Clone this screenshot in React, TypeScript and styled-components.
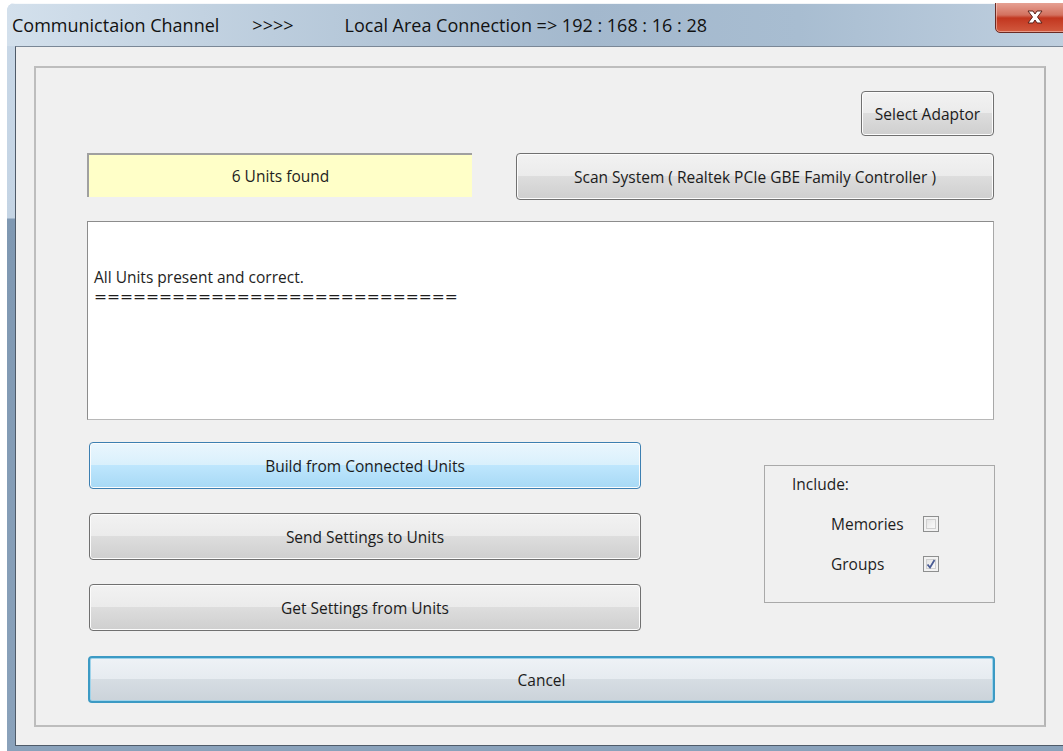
import styled, { createGlobalStyle, css } from "styled-components";

const GlobalStyle = createGlobalStyle`
  html, body {
    margin: 0;
    padding: 0;
    background: #ffffff;
    overflow: hidden;
  }
  body {
    font-family: "Open Sans", "Noto Sans", "Liberation Sans", sans-serif;
    font-size: 15.5px;
    color: #1e1e1e;
  }
`;

const Window = styled.div`
  margin: 3px 0 0 7px;
  height: 748px;
  display: flex;
  flex-direction: column;
  border-top-left-radius: 8px;
  background: linear-gradient(to bottom, #c9d8e7 0px, #c4d4e4 215px, #7f98b2 216px, #8aa2bb 100%);
  overflow: hidden;
`;

const TitleBar = styled.div`
  height: 43px;
  display: flex;
  align-items: center;
  padding-left: 5px;
  position: relative;
  background: linear-gradient(
    to right,
    #d3e0ec 0%,
    #bccddd 25%,
    #a3b8cd 55%,
    #a8bdd1 75%,
    #bfcfdf 100%
  );
  box-shadow: inset 0 1px 0 rgba(255, 255, 255, 0.85);
  font-size: 18px;
  color: #111;
`;

const TitlePart = styled.span<{ $gap: number }>`
  margin-right: ${(p) => p.$gap}px;
  white-space: nowrap;
`;

const CloseButton = styled.div`
  position: absolute;
  top: -3px;
  right: -12px;
  width: 78px;
  height: 31px;
  border: 1px solid #6b2a23;
  border-radius: 0 0 5px 5px;
  background: linear-gradient(to bottom, #e9a99c 0%, #d3715f 45%, #c2361f 55%, #d25a3f 100%);
  display: flex;
  align-items: center;
  justify-content: center;
  box-shadow: inset 0 0 0 1px rgba(255, 220, 210, 0.5);
`;

const ClientArea = styled.div`
  flex: 1;
  margin: 0 0 5px 8px;
  border-top: 1px solid #7a8796;
  border-left: 1px solid #4f5b69;
  border-bottom: 1px solid #4f5b69;
  background: #f0f0f0;
  padding: 19px 14px 18px 18px;
  display: flex;
`;

const GroupBox = styled.div`
  width: 1012px;
  border: 2px solid #bdbdbd;
  border-right-color: #b5b5b5;
  padding: 23px 50px 0 50px;
  box-sizing: border-box;
  display: flex;
  flex-direction: column;
`;

const Row = styled.div<{ $top: number; $end?: boolean }>`
  display: flex;
  justify-content: ${(p) => (p.$end ? "flex-end" : "space-between")};
  align-items: flex-start;
  margin-top: ${(p) => p.$top}px;
`;

const buttonFace = css`
  border: 1px solid #707070;
  border-radius: 4px;
  background: linear-gradient(to bottom, #f2f2f2 0%, #ebebeb 49%, #dddddd 50%, #cfcfcf 100%);
  box-shadow: inset 0 0 0 1px #fcfcfc;
`;

const Button = styled.div<{ $width: number; $height?: number; $tone?: "plain" | "hover" | "focus" }>`
  width: ${(p) => p.$width}px;
  height: ${(p) => p.$height ?? 47}px;
  box-sizing: border-box;
  display: flex;
  align-items: center;
  justify-content: center;
  color: #1b1b1b;
  white-space: nowrap;
  ${buttonFace}
  ${(p) =>
    p.$tone === "hover" &&
    css`
      border-color: #3c7fb1;
      background: linear-gradient(to bottom, #eaf6fd 0%, #d9f0fc 49%, #bee6fd 50%, #a7d9f5 100%);
    `}
  ${(p) =>
    p.$tone === "focus" &&
    css`
      border: 2px solid #3c9ac4;
      background: linear-gradient(to bottom, #eef2f6 0%, #e6ebf0 49%, #d6dde3 50%, #cbd3da 100%);
      box-shadow: inset 0 0 0 1px #9fd3ea;
    `}
`;

const StatusLabel = styled.div`
  width: 385px;
  height: 44px;
  box-sizing: border-box;
  margin-left: 1px;
  background: #ffffc8;
  border-top: 2px solid #a0a0a0;
  border-left: 2px solid #a0a0a0;
  display: flex;
  align-items: center;
  justify-content: center;
`;

const LogBox = styled.div`
  height: 199px;
  margin: 21px 0 0 1px;
  box-sizing: border-box;
  background: #ffffff;
  border: 1px solid #8c8c8c;
  border-right-color: #a8a8a8;
  border-bottom-color: #b8b8b8;
  padding: 44px 0 0 6px;
  line-height: 22px;
`;

const LogLine = styled.div`
  white-space: nowrap;
`;

// the separator row of '=' characters under the log message
const RuleLine = styled.div`
  white-space: nowrap;
  font-family: "DejaVu Sans", sans-serif;
  font-size: 15.5px;
  line-height: 22px;
  margin-top: -2px;
`;

const ActionArea = styled.div`
  display: flex;
  justify-content: space-between;
  margin-top: 22px;
  padding-left: 3px;
`;

const ButtonStack = styled.div`
  display: flex;
  flex-direction: column;
  gap: 24px;
`;

const IncludeBox = styled.div`
  width: 231px;
  height: 138px;
  margin-top: 23px;
  margin-right: -1px;
  box-sizing: border-box;
  border: 1px solid #a9a9a9;
  padding: 8px 0 0 27px;
  display: flex;
  flex-direction: column;
`;

const IncludeTitle = styled.div`
  line-height: 20px;
  margin-bottom: 20px;
`;

const OptionRow = styled.div`
  display: flex;
  align-items: center;
  height: 20px;
  margin-left: 39px;
  margin-bottom: 20px;
`;

const OptionLabel = styled.span`
  width: 92px;
`;

const CheckBox = styled.div`
  width: 16px;
  height: 16px;
  box-sizing: border-box;
  border: 1px solid #8e8f8f;
  background: linear-gradient(135deg, #dcdcdc 0%, #f4f4f4 60%, #ffffff 100%);
  box-shadow: inset 0 0 0 2px #f2f2f2, inset 0 0 0 3px #d0d0d0;
  display: flex;
  align-items: center;
  justify-content: center;
`;

const CancelRow = styled.div`
  margin-top: 25px;
  padding-left: 2px;
`;

export default function App() {
  return (
    <>
      <GlobalStyle />
      <Window>
        <TitleBar>
          <TitlePart $gap={33}>Communictaion Channel</TitlePart>
          <TitlePart $gap={51}>&gt;&gt;&gt;&gt;</TitlePart>
          <TitlePart $gap={0}>Local Area Connection =&gt; 192 : 168 : 16 : 28</TitlePart>
          <CloseButton>
            <svg width="18" height="14" viewBox="0 0 18 14">
              <path
                d="M2 1 L7 1 L9 4 L11 1 L16 1 L11.5 7 L16 13 L11 13 L9 10 L7 13 L2 13 L6.5 7 Z"
                fill="#ffffff"
                stroke="#5a2018"
                strokeWidth="1"
                strokeLinejoin="round"
              />
            </svg>
          </CloseButton>
        </TitleBar>
        <ClientArea>
          <GroupBox>
            <Row $top={0} $end>
              <Button $width={133} $height={45}>
                Select Adaptor
              </Button>
            </Row>
            <Row $top={17}>
              <StatusLabel>6 Units found</StatusLabel>
              <Button $width={478}>Scan System ( Realtek PCIe GBE Family Controller )</Button>
            </Row>
            <LogBox>
              <LogLine>All Units present and correct.</LogLine>
              <RuleLine>============================</RuleLine>
            </LogBox>
            <ActionArea>
              <ButtonStack>
                <Button $width={552} $tone="hover">
                  Build from Connected Units
                </Button>
                <Button $width={552}>Send Settings to Units</Button>
                <Button $width={552}>Get Settings from Units</Button>
              </ButtonStack>
              <IncludeBox>
                <IncludeTitle>Include:</IncludeTitle>
                <OptionRow>
                  <OptionLabel>Memories</OptionLabel>
                  <CheckBox />
                </OptionRow>
                <OptionRow>
                  <OptionLabel>Groups</OptionLabel>
                  <CheckBox>
                    <svg width="10" height="10" viewBox="0 0 10 10">
                      <path d="M1.5 5.5 L4 8.5 L8.5 1" fill="none" stroke="#4a5c94" strokeWidth="1.8" />
                    </svg>
                  </CheckBox>
                </OptionRow>
              </IncludeBox>
            </ActionArea>
            <CancelRow>
              <Button $width={907} $tone="focus">
                Cancel
              </Button>
            </CancelRow>
          </GroupBox>
        </ClientArea>
      </Window>
    </>
  );
}
